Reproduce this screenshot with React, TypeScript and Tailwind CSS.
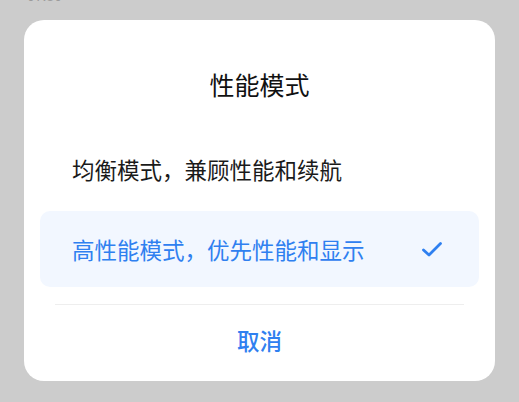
import React from "react";

export default function App() {
  return (
    <div
      className="w-[519px] h-[402px] bg-[#cccccc] overflow-hidden flex flex-col"
      style={{ fontFamily: '"Noto Sans CJK SC", "Noto Sans", sans-serif' }}
    >
      <div className="h-[20px] overflow-hidden">
        <div className="ml-[27px] mt-[-13px] text-[14px] leading-[16px] text-[#9c9c9c]">07:30</div>
      </div>
      <div className="ml-[24px] w-[471px] h-[361px] bg-white rounded-[20px] flex flex-col">
        <div className="pt-[46px] h-[82px] text-center text-[25px] leading-[36px] font-normal text-[#111111]">
          性能模式
        </div>
        <div className="mt-[30px] mx-[16px] h-[76px] px-[32px] flex items-center text-[22.5px] text-[#1a1a1a]">
          均衡模式，兼顾性能和续航
        </div>
        <div className="mt-[3px] mx-[16px] h-[76px] pl-[32px] pr-[37px] flex items-center justify-between rounded-[10px] bg-[#f2f7ff] text-[22.5px] text-[#2f80f0]">
          <span className="pt-[2px]">高性能模式，优先性能和显示</span>
          <svg width="20" height="15" viewBox="0 0 20 15" fill="none">
            <path d="M1.5 8 L7 13 L18.5 1.5" stroke="#2f80f0" strokeWidth="2.8" strokeLinecap="round" strokeLinejoin="round" />
          </svg>
        </div>
        <div className="mt-[17px] mx-[31px] h-px bg-[#eeeeee]" />
        <div className="h-[76px] pb-[4px] flex items-center justify-center text-[22.5px] font-medium text-[#2f80f0]">
          取消
        </div>
      </div>
    </div>
  );
}
